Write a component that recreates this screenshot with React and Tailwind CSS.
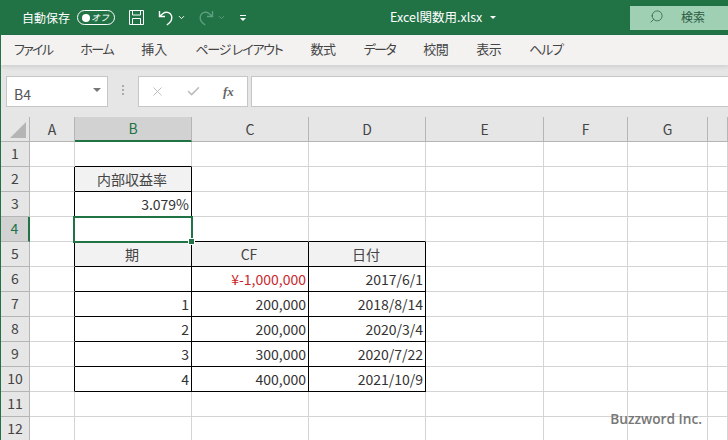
import React from 'react';
import { ChevronDown, Search, Check, X } from 'lucide-react';

const FONT = "font-['Noto_Sans_CJK_JP','Noto_Sans',sans-serif]";

const columns = ['A', 'B', 'C', 'D', 'E', 'F', 'G', ''];
const rows = [1, 2, 3, 4, 5, 6, 7, 8, 9, 10, 11, 12];
const menus = [
  { label: 'ファイル', track: 'tracking-[-1.7px]' },
  { label: 'ホーム', track: 'tracking-[-1.4px]' },
  { label: '挿入', track: '' },
  { label: 'ページ レイアウト', track: 'tracking-[-1.2px]' },
  { label: '数式', track: 'tracking-[-0.5px]' },
  { label: 'データ', track: 'tracking-[-1.6px]' },
  { label: '校閲', track: 'tracking-[-0.5px]' },
  { label: '表示', track: 'tracking-[-0.5px]' },
  { label: 'ヘルプ', track: 'tracking-[-1.3px]' },
];

// cell contents, keyed by column + row
const cells = {
  B2: { text: '内部収益率', head: true },
  B3: { text: '3.079%' },
  B5: { text: '期', head: true },
  C5: { text: 'CF', head: true },
  D5: { text: '日付', head: true },
  B6: { text: '' },
  C6: { text: '¥-1,000,000', red: true },
  D6: { text: '2017/6/1' },
  B7: { text: '1' },
  C7: { text: '200,000' },
  D7: { text: '2018/8/14' },
  B8: { text: '2' },
  C8: { text: '200,000' },
  D8: { text: '2020/3/4' },
  B9: { text: '3' },
  C9: { text: '300,000' },
  D9: { text: '2020/7/22' },
  B10: { text: '4' },
  C10: { text: '400,000' },
  D10: { text: '2021/10/9' },
};

const isTable = (col, row) => Boolean(cells[col + row]);

function Cell({ col, row }) {
  const next = columns[columns.indexOf(col) + 1];
  const cell = cells[col + row];
  const right = isTable(col, row) || (next && isTable(next, row));
  const bottom = isTable(col, row) || isTable(col, row + 1);
  const selected = col === 'B' && row === 4;

  return (
    <div
      className={`relative flex items-center overflow-visible whitespace-nowrap border-r border-b pb-[1px] pr-[2px] text-[14px] leading-none ${
        selected ? 'z-10' : ''
      } ${right ? 'border-r-black' : 'border-r-[#d4d4d4]'} ${bottom ? 'border-b-black' : 'border-b-[#d4d4d4]'} ${
        cell?.head ? 'justify-center bg-[#f2f2f2] text-[#444]' : 'justify-end'
      } ${cell?.red ? 'text-[#c8282c]' : 'text-[#333]'}`}
    >
      {cell?.text}
      {selected && (
        <>
          <div className="absolute -left-[2px] -top-[1px] h-[27px] w-[120px] border-2 border-[#217346]" />
          <div className="absolute -bottom-[4px] -right-[4px] h-[7px] w-[7px] border border-white bg-[#217346]" />
        </>
      )}
    </div>
  );
}

function TitleBar() {
  return (
    <div className="flex h-[35px] items-center bg-[#217346] text-white">
      <span className="ml-[21px] text-[12px]">自動保存</span>
      <div className="ml-[7px] flex h-[15px] w-[38px] items-center justify-between rounded-full border border-white pl-[4px] pr-[5px]">
        <span className="h-[8px] w-[8px] rounded-full bg-white" />
        <span className="text-[9px] italic leading-none">オフ</span>
      </div>
      <svg className="ml-[13px] h-[17px] w-[17px]" viewBox="0 0 17 17" fill="none" stroke="currentColor" strokeWidth="1">
        <path d="M1.500 1.500h14v14h-14zM4.500 1.500v4.500h8v-4.500M4.500 15.500v-6h8v6" />
      </svg>
      <svg className="ml-[12px] h-[18px] w-[18px]" viewBox="0 0 18 18" fill="none" stroke="currentColor" strokeWidth="1.4">
        <path d="M2.500 2v5.500h5.500M2.500 7.500L6 4.500c1-.8 2.200-1.200 3.500-1.200 3 0 5.300 2.400 5.300 5.300 0 3-1.800 5.500-5 7.400" />
      </svg>
      <ChevronDown className="ml-[2px] h-[9px] w-[9px]" strokeWidth={2.5} />
      <svg className="ml-[11px] h-[18px] w-[18px] text-[#5d9f7e]" viewBox="0 0 18 18" fill="none" stroke="currentColor" strokeWidth="1.4">
        <path d="M15.500 2v5.500h-5.500M15.500 7.500L12 4.500c-1-.8-2.200-1.200-3.500-1.200-3 0-5.300 2.400-5.300 5.300 0 3 1.800 5.500 5 7.400" />
      </svg>
      <ChevronDown className="ml-[2px] h-[9px] w-[9px] text-[#5d9f7e]" strokeWidth={2.5} />
      <div className="ml-[13px] flex w-[8px] flex-col items-center gap-[2px]">
        <span className="h-[1px] w-[6px] bg-white" />
        <span className="h-0 w-0 border-x-[3px] border-t-[3px] border-x-transparent border-t-white" />
      </div>
      <div className="ml-[143px] flex w-[113px] items-center text-[12.5px]">
        <span>Excel関数用.xlsx</span>
        <span className="ml-[8px] h-0 w-0 border-x-[3px] border-t-[3px] border-x-transparent border-t-white" />
      </div>
      <div className="ml-auto flex h-[24px] w-[98px] items-center bg-[#9fd0b4] pb-[2px] text-[#2c5a42]">
        <Search className="ml-[19px] h-[15px] w-[15px] -scale-x-100" strokeWidth={1.2} />
        <span className="ml-[17px] text-[12px]">検索</span>
      </div>
    </div>
  );
}

function MenuBar() {
  return (
    <div className="relative z-10 flex h-[30px] items-center gap-[28px] bg-[#f3f2f1] pb-[3px] pl-[13px] text-[13px] text-[#444] shadow-[0_2px_4px_rgba(0,0,0,0.1)] [font-feature-settings:'palt']">
      {menus.map((m) => (
        <span key={m.label} className={m.track}>
          {m.label}
        </span>
      ))}
    </div>
  );
}

function FormulaBar() {
  return (
    <div className="flex h-[52px] items-start bg-[#e6e6e6] pl-[5px] pt-[11px]">
      <div className="flex h-[31px] w-[102px] items-center justify-between border border-[#c6c6c6] bg-white pl-[7px] pr-[6px] text-[14px] text-[#555]">
        <span className="pt-[5px]">B4</span>
        <span className="mb-[4px] h-0 w-0 border-x-[4px] border-t-[4px] border-x-transparent border-t-[#777]" />
      </div>
      <div className="ml-[14px] mt-[9px] flex w-[3px] flex-col gap-[2px]">
        <span className="h-[2px] w-[2px] bg-[#aaa]" />
        <span className="h-[2px] w-[2px] bg-[#aaa]" />
        <span className="h-[2px] w-[2px] bg-[#aaa]" />
      </div>
      <div className="ml-[13px] flex h-[31px] w-[110px] items-center border border-[#c6c6c6] bg-white text-[#bbb]">
        <X className="ml-[11px] h-[15px] w-[15px]" strokeWidth={1.5} />
        <Check className="ml-[21px] h-[15px] w-[15px]" strokeWidth={2.5} />
        <span className="ml-[22px] font-['Liberation_Serif',serif] text-[13px] font-bold italic text-[#666]">fx</span>
      </div>
      <div className="ml-[3px] h-[31px] flex-1 border-y border-l border-[#c6c6c6] bg-white" />
    </div>
  );
}

function Sheet() {
  return (
    <div className="grid grid-cols-[29px_45px_117px_117px_117px_118px_84px_80px_1fr] grid-rows-[25px_repeat(12,25px)] text-[#444]">
      <div className="flex items-end justify-end border-r border-b border-[#b5b5b5] bg-[#e6e6e6] pb-[3px] pr-[3px]">
        <span className="h-0 w-0 border-b-[16px] border-l-[16px] border-b-[#b5b5b5] border-l-transparent" />
      </div>
      {columns.map((c) => (
        <div
          key={c}
          className={`flex items-center justify-center text-[14px] ${
            c === 'B'
              ? 'border-b-2 border-b-[#217346] border-r border-r-[#b5b5b5] bg-[#d2d2d2] text-[#217346]'
              : 'border-r border-b border-[#b5b5b5] bg-[#e6e6e6]'
          }`}
        >
          {c}
        </div>
      ))}
      {rows.map((r) => (
        <React.Fragment key={r}>
          <div
            className={`flex items-center justify-center pb-[1px] text-[14px] ${
              r === 4
                ? 'border-r-2 border-b border-r-[#217346] border-b-[#b5b5b5] bg-[#d2d2d2] text-[#217346]'
                : 'border-r border-b border-[#b5b5b5] bg-[#e6e6e6]'
            }`}
          >
            {r}
          </div>
          {columns.map((c) => (
            <Cell key={c} col={c} row={r} />
          ))}
        </React.Fragment>
      ))}
    </div>
  );
}

export default function App() {
  return (
    <div className={`relative h-[440px] w-[728px] overflow-hidden border-l border-l-[#217346] bg-white ${FONT}`}>
      <TitleBar />
      <MenuBar />
      <FormulaBar />
      <Sheet />
      <div className="absolute bottom-[10px] right-[26px] z-20 font-['Open_Sans',sans-serif] text-[13.7px] font-semibold text-[#777]">
        Buzzword Inc.
      </div>
    </div>
  );
}
